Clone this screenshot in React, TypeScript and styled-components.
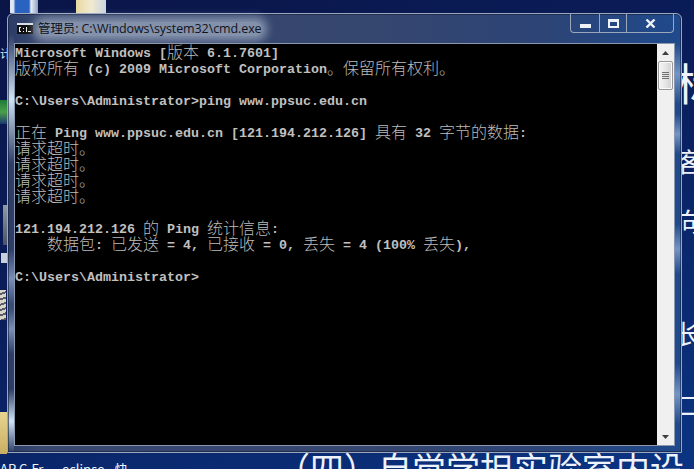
import React from 'react';
import styled, {createGlobalStyle} from 'styled-components';

const GlobalStyle = createGlobalStyle`
    html, body {
        margin: 0;
        padding: 0;
        overflow: hidden;
    }
`

const Desktop = styled.div`
    position: relative;
    width: 694px;
    height: 469px;
    overflow: hidden;
    background: linear-gradient(160deg, #0a1548 0%, #0a1e5c 45%, #0a3482 100%);
`

const DesktopIcon = styled.div<{ $left: number, $top: number, $w: number, $h: number, $bg: string }>`
    position: absolute;
    left: ${({$left}) => $left}px;
    top: ${({$top}) => $top}px;
    width: ${({$w}) => $w}px;
    height: ${({$h}) => $h}px;
    background: ${({$bg}) => $bg};
`

const DesktopText = styled.div<{ $left: number, $top: number, $size: number }>`
    position: absolute;
    left: ${({$left}) => $left}px;
    top: ${({$top}) => $top}px;
    font-family: "Noto Sans CJK SC", sans-serif;
    font-size: ${({$size}) => $size}px;
    line-height: 1;
    color: #eef2fa;
    white-space: nowrap;
`

const strong = 'linear-gradient(180deg, rgba(190, 220, 245, 0), rgba(215, 238, 250, 0.95), rgba(190, 220, 245, 0))'
const soft = 'linear-gradient(180deg, rgba(170, 200, 240, 0), rgba(170, 200, 240, 0.6), rgba(170, 200, 240, 0))'

const Window = styled.div`
    position: absolute;
    left: 7px;
    top: 13px;
    width: 675px;
    height: 440px;
    box-sizing: border-box;
    display: flex;
    flex-direction: column;
    padding: 0 7px 7px 7px;
    border: 1px solid #9aa7bd;
    border-radius: 6px 6px 0 0;
    background-color: #2b3c66;
    background-repeat: no-repeat;
    background-image:
        ${strong}, ${soft}, ${soft}, ${strong},
        ${soft}, ${soft}, ${soft}, ${soft},
        linear-gradient(90deg, #2b3c66 0px, #39486f 30px, #35466f 55%, #2c4476 80%, #1f4a8c 100%);
    background-size:
        6px 130px, 6px 60px, 6px 50px, 6px 64px,
        6px 60px, 6px 40px, 6px 50px, 6px 60px,
        100% 100%;
    background-position:
        0 20px, 0 235px, 0 290px, 0 375px,
        100% 30px, 100% 100px, 100% 210px, 100% 350px,
        0 0;
    box-shadow: inset 0 0 0 1px rgba(20, 30, 60, 0.6);
`

const TitleBar = styled.div`
    height: 30px;
    flex-shrink: 0;
    display: flex;
    align-items: center;
    gap: 5px;
    padding: 0 0 1px 2px;
    box-sizing: border-box;
`

const Title = styled.span`
    font-family: "Open Sans", "Noto Sans CJK SC", sans-serif;
    font-size: 12.5px;
    letter-spacing: -0.1px;
    color: #10141c;
    background: rgba(225, 235, 245, 0.45);
    box-shadow: 0 0 9px 5px rgba(225, 235, 245, 0.45);
    border-radius: 6px;
    line-height: 14px;
`

const CaptionButtons = styled.div`
    position: absolute;
    right: 7px;
    top: -1px;
    height: 20px;
    display: flex;
    box-sizing: border-box;
    border: 1px solid #9aa7bd;
    border-top: none;
    border-radius: 0 0 4px 4px;
`

const CaptionButton = styled.div<{ $w: number, $low?: boolean }>`
    width: ${({$w}) => $w}px;
    display: flex;
    align-items: center;
    justify-content: center;
    padding-top: ${({$low}) => $low ? 6 : 1}px;
    box-sizing: border-box;
    & + & {
        border-left: 1px solid #9aa7bd;
    }
`

const Client = styled.div`
    flex: 1;
    min-height: 0;
    display: flex;
    background: #000;
    outline: 1px solid #8b98b0;
`

const Console = styled.div`
    flex: 1;
    min-width: 0;
    height: 100%;
    box-sizing: border-box;
    padding-top: 1px;
    overflow: hidden;
    color: #c0c0c0;
    font-family: "Liberation Mono", "DejaVu Sans Mono", monospace;
    font-size: 13.33px;
    font-weight: 700;
`

const Line = styled.div`
    height: 16px;
    white-space: pre;
    display: flex;
    align-items: flex-start;
`

const Cell = styled.span`
    display: inline-block;
    width: 8px;
    height: 16px;
    text-align: center;
    line-height: 18px;
`

const Wide = styled.span`
    display: inline-block;
    width: 16px;
    height: 16px;
    text-align: center;
    color: #bcbcbc;
    font-family: "Noto Sans CJK SC", sans-serif;
    font-size: 16px;
    font-weight: 300;
    line-height: 13px;
`

const Scrollbar = styled.div`
    width: 17px;
    flex-shrink: 0;
    display: flex;
    flex-direction: column;
    align-items: center;
    background: #f0f0f0;
`

const ArrowBox = styled.div`
    height: 17px;
    width: 100%;
    flex-shrink: 0;
    display: flex;
    align-items: center;
    justify-content: center;
`

const Thumb = styled.div`
    width: 15px;
    height: 29px;
    flex-shrink: 0;
    box-sizing: border-box;
    border: 1px solid #979797;
    border-radius: 2px;
    background: linear-gradient(90deg, #f4f4f4 0%, #e6e6e6 50%, #cfcfcf 100%);
    box-shadow: inset 0 0 0 1px #fafafa;
    display: flex;
    flex-direction: column;
    align-items: center;
    justify-content: center;
    gap: 1px;
`

const Grip = styled.div`
    width: 7px;
    height: 1px;
    background: #6f6f6f;
`

const Spacer = styled.div`
    flex: 1;
`

const lines = [
    'Microsoft Windows [版本 6.1.7601]',
    '版权所有 (c) 2009 Microsoft Corporation。保留所有权利。',
    '',
    'C:\\Users\\Administrator>ping www.ppsuc.edu.cn',
    '',
    '正在 Ping www.ppsuc.edu.cn [121.194.212.126] 具有 32 字节的数据:',
    '请求超时。',
    '请求超时。',
    '请求超时。',
    '请求超时。',
    '',
    '121.194.212.126 的 Ping 统计信息:',
    '    数据包: 已发送 = 4, 已接收 = 0, 丢失 = 4 (100% 丢失),',
    '',
    'C:\\Users\\Administrator>',
]

const isWide = (ch: string) => ch.charCodeAt(0) > 0x2e80

const ConsoleLine = ({text}: { text: string }) => <Line>
    {Array.from(text).map((ch, i) => isWide(ch) ? <Wide key={i}>{ch}</Wide> : <Cell key={i}>{ch}</Cell>)}
</Line>

const CmdIcon = () => <svg width="16" height="11" viewBox="0 0 16 11">
    <rect x="0" y="0" width="16" height="11" fill="#111"/>
    <rect x="0" y="0" width="16" height="2" fill="#d8dde6"/>
    <rect x="2" y="4" width="2" height="1" fill="#eee"/>
    <rect x="2" y="5" width="1" height="3" fill="#eee"/>
    <rect x="2" y="8" width="2" height="1" fill="#eee"/>
    <rect x="6" y="5" width="1" height="1" fill="#eee"/>
    <rect x="6" y="8" width="1" height="1" fill="#eee"/>
    <rect x="9" y="4" width="1" height="5" fill="#eee"/>
    <rect x="11" y="8" width="3" height="1" fill="#eee"/>
</svg>

const Arrow = ({down}: { down?: boolean }) => <svg width="7" height="4" viewBox="0 0 7 4">
    <path d={down ? 'M0 0H7L3.5 4Z' : 'M0 4H7L3.5 0Z'} fill="#404040"/>
</svg>

const App = () => <>
    <GlobalStyle/>
    <Desktop>
        <DesktopIcon $left={10} $top={0} $w={28} $h={13} $bg="linear-gradient(90deg, #dfe8f2 0, #dfe8f2 12%, #2a62c0 20%, #2a62c0 68%, #e8eef5 75%, #8aa0c0 100%)"/>
        <DesktopIcon $left={76} $top={0} $w={30} $h={13} $bg="linear-gradient(90deg, #e8d9a0, #f2ead0 50%, #c8d4e0)"/>
        <DesktopIcon $left={0} $top={100} $w={7} $h={24} $bg="linear-gradient(180deg, #1f7a3a, #4aa04a 50%, #1a3a70)"/>
        <DesktopIcon $left={3} $top={205} $w={4} $h={40} $bg="linear-gradient(180deg, #8f99a8, #4a5468)"/>
        <DesktopIcon $left={1} $top={253} $w={6} $h={10} $bg="#c8d0dc"/>
        <DesktopIcon $left={0} $top={290} $w={6} $h={30} $bg="repeating-linear-gradient(160deg, #d8d4c8 0 3px, #5a5a68 3px 5px)"/>
        <DesktopIcon $left={0} $top={412} $w={7} $h={42} $bg="linear-gradient(180deg, #e8d590, #c8ae62)"/>
        <DesktopText $left={0} $top={48} $size={11}>计</DesktopText>
        <DesktopText $left={0} $top={462} $size={13}>AP C-Fr</DesktopText>
        <DesktopText $left={62} $top={462} $size={13}>eclipse - 快</DesktopText>
        <DesktopText $left={276} $top={451} $size={34}>（四）自觉学担实验室内设</DesktopText>
        <DesktopText $left={675} $top={60} $size={44}>标</DesktopText>
        <DesktopText $left={676} $top={148} $size={26}>客</DesktopText>
        <DesktopText $left={676} $top={208} $size={26}>向</DesktopText>
        <DesktopText $left={676} $top={320} $size={26}>长</DesktopText>
        <DesktopText $left={676} $top={391} $size={26}>二</DesktopText>
        <Window>
            <TitleBar>
                <CmdIcon/>
                <Title>管理员: C:\Windows\system32\cmd.exe</Title>
            </TitleBar>
            <CaptionButtons>
                <CaptionButton $w={28} $low>
                    <svg width="11" height="4" viewBox="0 0 11 4"><rect width="11" height="4" fill="#eef1f6"/></svg>
                </CaptionButton>
                <CaptionButton $w={27}>
                    <svg width="11" height="9" viewBox="0 0 11 9"><path fillRule="evenodd" d="M0 0H11V9H0ZM2 3V7H9V3Z" fill="#eef1f6"/></svg>
                </CaptionButton>
                <CaptionButton $w={47}>
                    <svg width="11" height="9" viewBox="0 0 11 9"><path d="M1.5 0.5L9.5 8.5M9.5 0.5L1.5 8.5" stroke="#eef1f6" strokeWidth="2.4"/></svg>
                </CaptionButton>
            </CaptionButtons>
            <Client>
                <Console>
                    {lines.map((text, i) => <ConsoleLine key={i} text={text}/>)}
                </Console>
                <Scrollbar>
                    <ArrowBox><Arrow/></ArrowBox>
                    <Thumb><Grip/><Grip/><Grip/><Grip/></Thumb>
                    <Spacer/>
                    <ArrowBox><Arrow down/></ArrowBox>
                </Scrollbar>
            </Client>
        </Window>
    </Desktop>
</>

export default App;
